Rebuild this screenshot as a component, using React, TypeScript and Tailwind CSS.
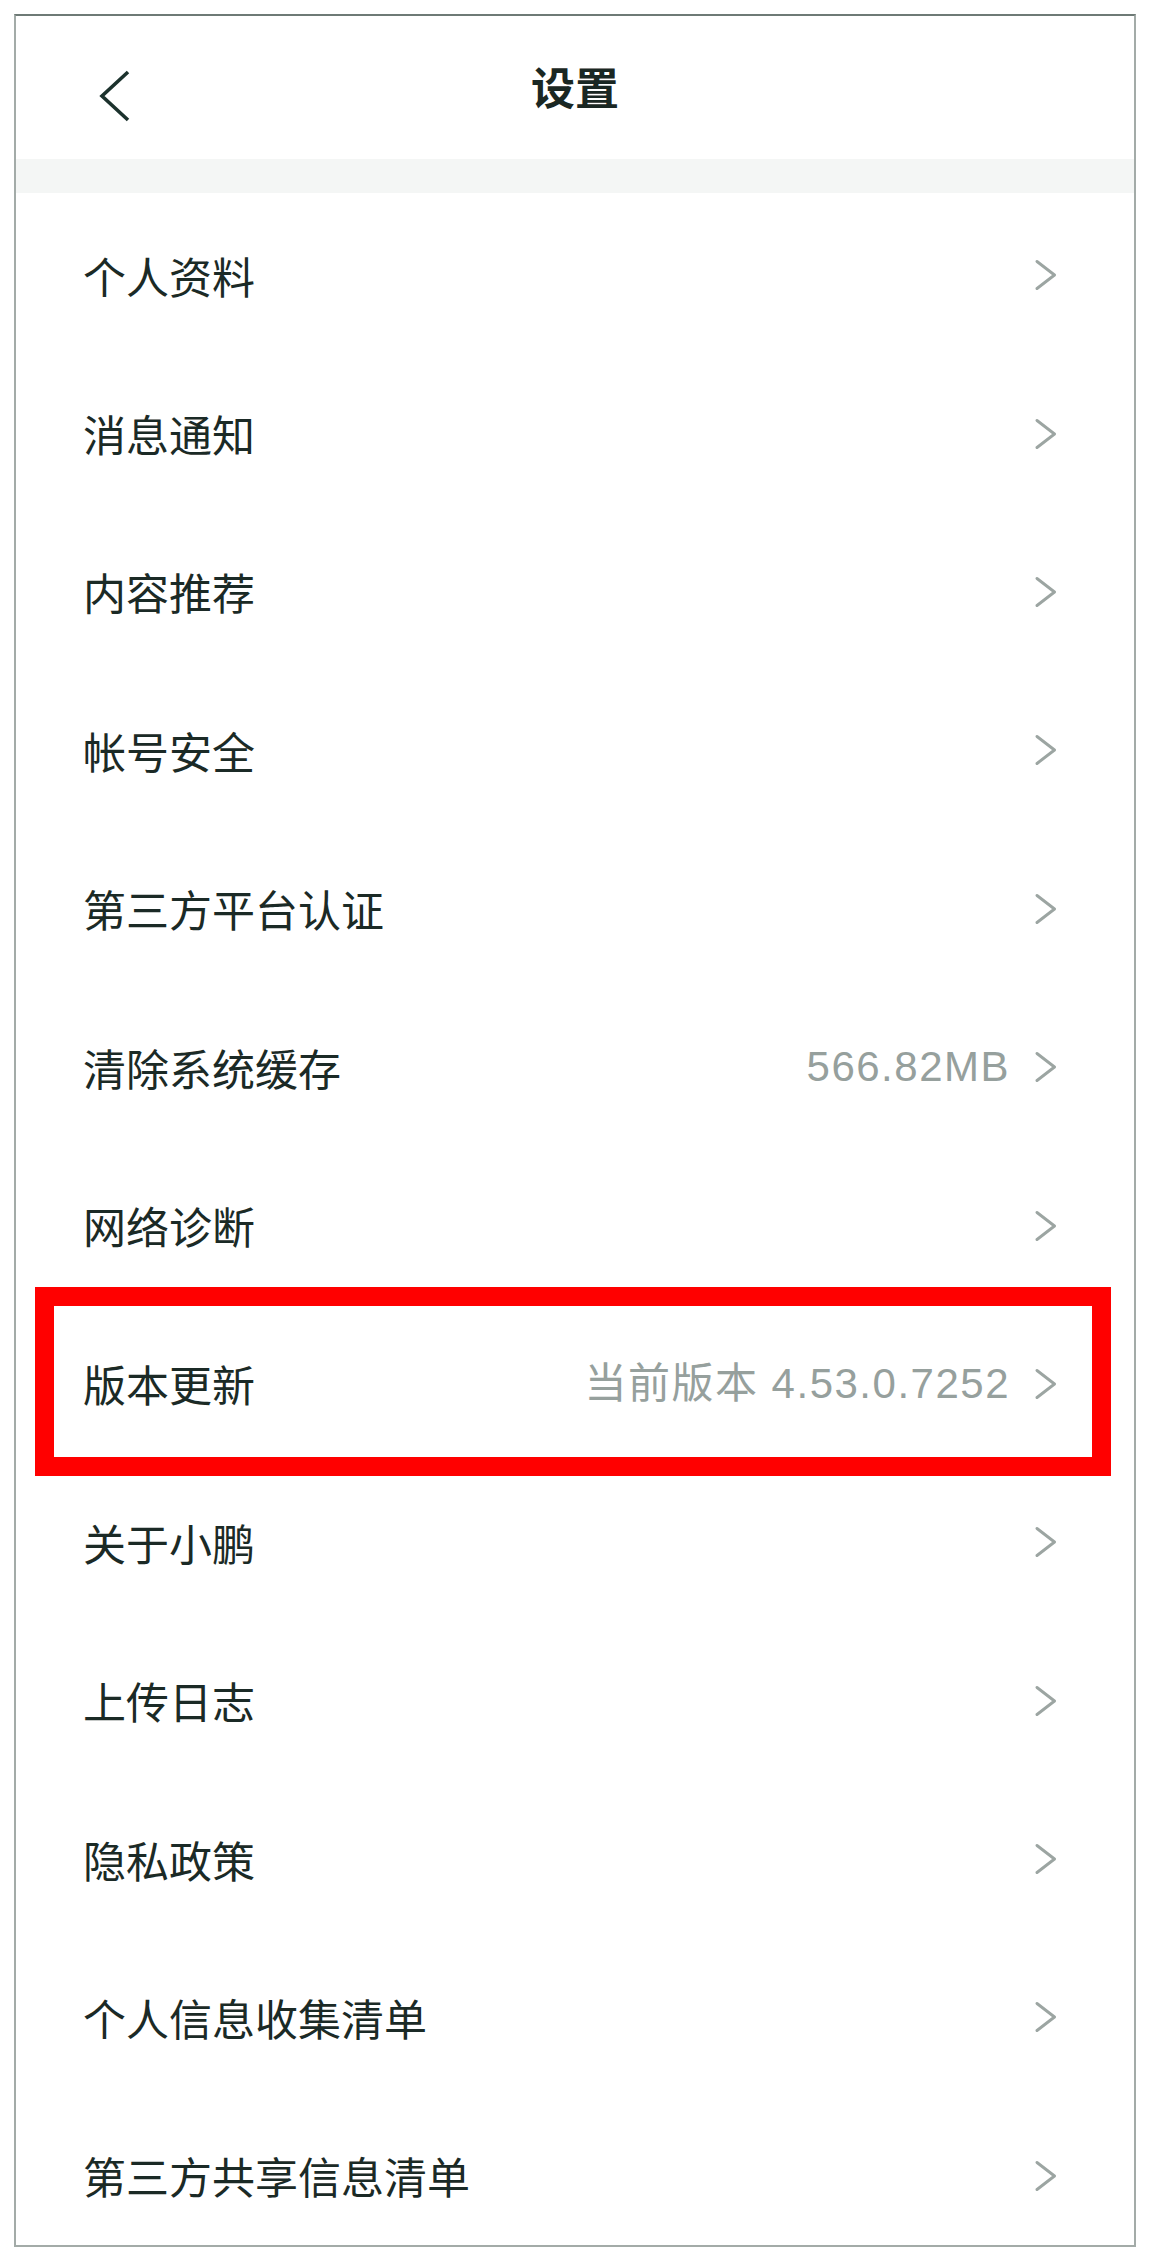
import React from "react";

const rows: { label: string; value?: string }[] = [
  { label: "个人资料" },
  { label: "消息通知" },
  { label: "内容推荐" },
  { label: "帐号安全" },
  { label: "第三方平台认证" },
  { label: "清除系统缓存", value: "566.82MB" },
  { label: "网络诊断" },
  { label: "版本更新", value: "当前版本 4.53.0.7252" },
  { label: "关于小鹏" },
  { label: "上传日志" },
  { label: "隐私政策" },
  { label: "个人信息收集清单" },
  { label: "第三方共享信息清单" },
];

function Chevron() {
  return (
    <svg width="22" height="30" viewBox="0 0 22 30" className="shrink-0">
      <polyline
        points="2,1.5 19.5,15 2,28.5"
        fill="none"
        stroke="#9ca5a2"
        strokeWidth="2.9"
        strokeLinecap="round"
        strokeLinejoin="round"
      />
    </svg>
  );
}

export default function App() {
  return (
    <div className="w-[1150px] h-[2260px] bg-white pt-[14px] pl-[14px]">
      <div className="w-[1122px] h-[2233px] overflow-hidden border-2 border-[#a3aba8] border-t-[#6e7a76] bg-white flex flex-col">
        {/* header */}
        <div className="relative h-[143px] shrink-0 flex items-center justify-center">
          <svg
            width="34"
            height="52"
            viewBox="0 0 34 52"
            className="absolute left-[82px] top-[54px]"
          >
            <polyline
              points="30,2 4,26 30,50"
              fill="none"
              stroke="#1c322d"
              strokeWidth="3.6"
              strokeLinejoin="miter"
            />
          </svg>
          <span
            className="text-[44px] font-semibold text-[#1a2723] leading-none mt-[-4px]"
            style={{ fontFamily: '"Noto Sans CJK SC", "Noto Sans", sans-serif' }}
          >
            设置
          </span>
        </div>
        {/* gray band */}
        <div className="h-[34px] shrink-0 bg-[#f4f6f5]" />
        {/* rows */}
        {rows.map((r, i) => (
          <div
            key={i}
            className="relative h-[158.4px] shrink-0 flex items-center pl-[67px] pr-[77px] pt-[6px]"
          >
            <span
              className="flex-1 text-[43px] leading-none text-[#1b2a26]"
              style={{ fontFamily: '"Noto Sans CJK SC", "Noto Sans", sans-serif' }}
            >
              {r.label}
            </span>
            {r.value && (
              <span
                className="mr-[25px] text-[42px] leading-none text-[#96a09d] tracking-[1.5px]"
                style={{ fontFamily: '"Liberation Sans", "Noto Sans CJK SC", sans-serif' }}
              >
                {r.value}
              </span>
            )}
            <Chevron />
            {r.label === "版本更新" && (
              <div className="absolute left-[19px] right-[23px] top-[-15px] bottom-[-16px] border-[19px] border-[#ff0000] pointer-events-none" />
            )}
          </div>
        ))}
      </div>
    </div>
  );
}
